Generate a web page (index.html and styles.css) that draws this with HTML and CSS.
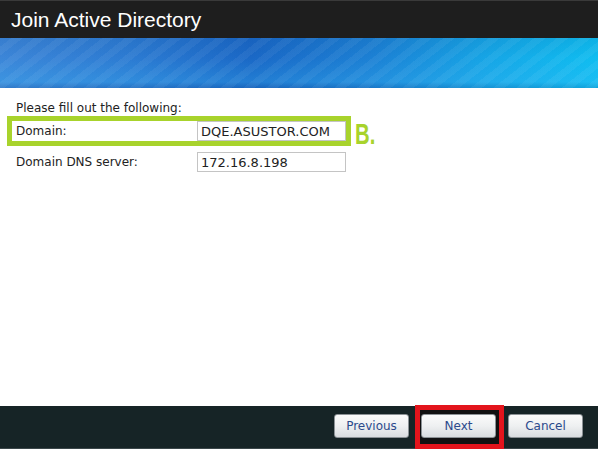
FILE: index.html
```html
<!DOCTYPE html>
<html lang="en">
<head>
<meta charset="utf-8">
<title>Join Active Directory</title>
<link rel="stylesheet" href="styles.css">
</head>
<body>
<div class="dialog">
  <header class="titlebar"><h1 class="title">Join Active Directory</h1></header>
  <div class="banner"></div>
  <main class="content">
    <p class="intro">Please fill out the following:</p>
    <div class="field field-highlight">
      <label class="field-label">Domain:</label>
      <input class="field-input" type="text" value="DQE.ASUSTOR.COM">
      <span class="annotation">B.</span>
    </div>
    <div class="field">
      <label class="field-label">Domain DNS server:</label>
      <input class="field-input" type="text" value="172.16.8.198">
    </div>
  </main>
  <footer class="footer">
    <button class="btn">Previous</button>
    <span class="next-wrap"><button class="btn">Next</button></span>
    <button class="btn">Cancel</button>
  </footer>
</div>
</body>
</html>
```
FILE: styles.css
```css
html, body {
  margin: 0;
  padding: 0;
  background: #fff;
}

.dialog {
  width: 598px;
  height: 449px;
  display: flex;
  flex-direction: column;
  overflow: hidden;
}

.titlebar {
  height: 38px;
  box-sizing: border-box;
  background: #1e1e1e;
  border-top: 1px solid #3a3a3a;
  padding-left: 11px;
  display: flex;
  align-items: center;
}

.title {
  margin: 0;
  font-family: "Liberation Sans", Arial, sans-serif;
  font-weight: normal;
  font-size: 21px;
  line-height: 21px;
  color: #fff;
}

.banner {
  height: 50px;
  flex: none;
  background:
    repeating-linear-gradient(142deg, rgba(255,255,255,0) 0px, rgba(255,255,255,0) 7px, rgba(255,255,255,0.05) 7px, rgba(255,255,255,0.05) 14px),
    linear-gradient(to bottom, rgba(0,30,90,0.08) 0%, rgba(0,0,0,0) 40%, rgba(60,190,250,0.25) 88%, rgba(20,90,160,0.25) 100%),
    linear-gradient(to right, #3c86d8 0%, #2c7bd2 22%, #1a68c6 42%, #1c80d4 62%, #16a6e6 82%, #0fbdf0 100%);
}

.content {
  flex: 1;
  background: #fff;
  padding: 13px 0 0 7px;
  font-family: "DejaVu Sans", Verdana, sans-serif;
  font-size: 12px;
  color: #222;
}

.intro {
  margin: 0 0 1px 9px;
  line-height: 14px;
}

.field {
  position: relative;
  width: 344px;
  height: 30px;
  box-sizing: border-box;
  border: 5px solid transparent;
  padding-left: 4px;
  display: flex;
  align-items: center;
}

.field + .field {
  margin-top: 1px;
}

.field-highlight {
  border-color: #a8d32c;
}

.field-label {
  width: 181px;
  flex: none;
}

.field-input {
  width: 149px;
  height: 20px;
  box-sizing: border-box;
  margin: 0;
  border: 1px solid #c4c4c4;
  padding: 0 3px;
  font-family: "DejaVu Sans", Verdana, sans-serif;
  font-size: 13px;
  color: #222;
  background: #fff;
  outline: none;
}

.annotation {
  position: absolute;
  left: 343px;
  top: -1px;
  font-family: "Liberation Sans", Arial, sans-serif;
  font-weight: bold;
  font-size: 29px;
  line-height: 29px;
  color: #a8d32c;
  transform: scaleX(0.7);
  transform-origin: left center;
}

.footer {
  height: 43px;
  flex: none;
  box-sizing: border-box;
  background: #162426;
  border-bottom: 1px solid #3b474a;
  display: flex;
  justify-content: flex-end;
  align-items: flex-start;
  gap: 12px;
  padding: 8px 15px 0 0;
}

.btn {
  width: 75px;
  height: 24px;
  margin: 0;
  padding: 0;
  border: 1px solid #8c9296;
  border-radius: 3px;
  background: linear-gradient(to bottom, #fbfbfb 0%, #eef0f1 50%, #d9dcdf 100%);
  color: #2c4a8c;
  font-family: "DejaVu Sans", Verdana, sans-serif;
  font-size: 12px;
}

.next-wrap {
  position: relative;
  display: flex;
}

.next-wrap::before {
  content: "";
  position: absolute;
  left: -6px;
  right: -8px;
  top: -9px;
  bottom: -11px;
  border: 5px solid #e3141c;
  background: #111;
  z-index: 0;
}

.next-wrap .btn {
  position: relative;
  z-index: 1;
}
```
